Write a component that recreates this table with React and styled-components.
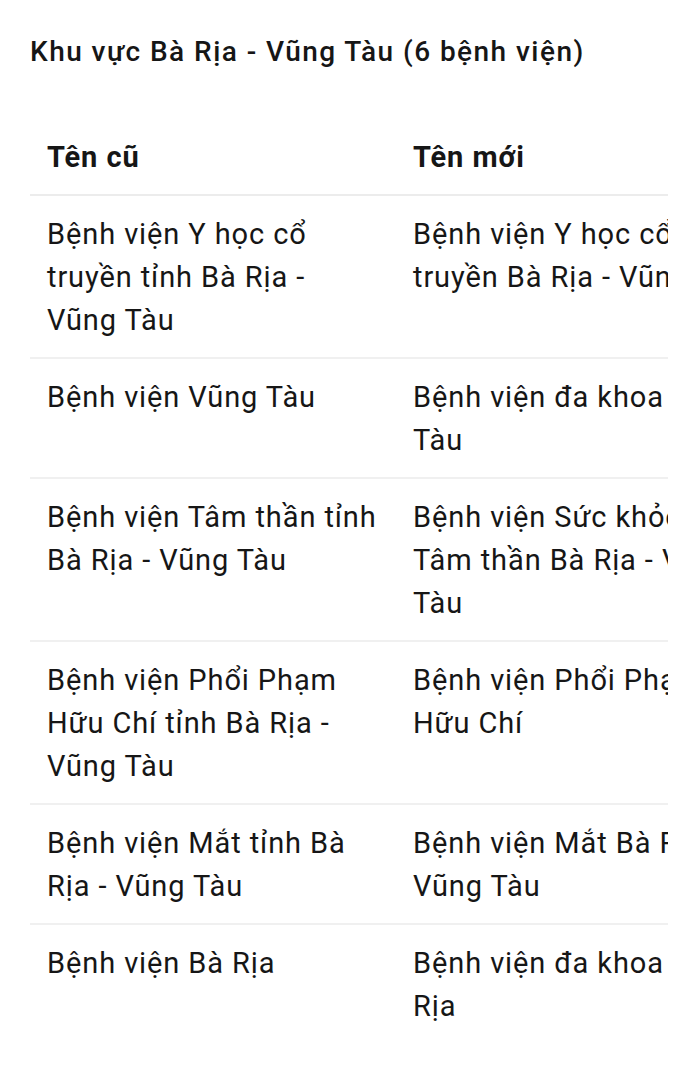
import styled, { createGlobalStyle } from 'styled-components';

const rows = [
    { old: "Bệnh viện Y học cổ truyền tỉnh Bà Rịa - Vũng Tàu", next: "Bệnh viện Y học cổ truyền Bà Rịa - Vũng Tàu" },
    { old: "Bệnh viện Vũng Tàu", next: "Bệnh viện đa khoa Vũng Tàu" },
    { old: "Bệnh viện Tâm thần tỉnh Bà Rịa - Vũng Tàu", next: "Bệnh viện Sức khỏe Tâm thần Bà Rịa - Vũng Tàu" },
    { old: "Bệnh viện Phổi Phạm Hữu Chí tỉnh Bà Rịa - Vũng Tàu", next: "Bệnh viện Phổi Phạm Hữu Chí" },
    { old: "Bệnh viện Mắt tỉnh Bà Rịa - Vũng Tàu", next: "Bệnh viện Mắt Bà Rịa - Vũng Tàu" },
    { old: "Bệnh viện Bà Rịa", next: "Bệnh viện đa khoa Bà Rịa" },
];

export default function App() {
    return (
        <>
            <GlobalStyle />
            <Page>
                <Title>Khu vực Bà Rịa - Vũng Tàu (6 bệnh viện)</Title>
                <TableWrap>
                    <Table>
                        <thead>
                            <tr>
                                <HeadCell>Tên cũ</HeadCell>
                                <HeadCell>Tên mới</HeadCell>
                            </tr>
                        </thead>
                        <tbody>
                            {rows.map((r, i) => (
                                <Row key={i} $last={i === rows.length - 1}>
                                    <Cell>{r.old}</Cell>
                                    <Cell>{r.next}</Cell>
                                </Row>
                            ))}
                        </tbody>
                    </Table>
                </TableWrap>
            </Page>
        </>
    )
}


// styled-components
const GlobalStyle = createGlobalStyle`
    body {
        margin: 0;
        background: #fff;
        font-family: Roboto, "Noto Sans", sans-serif;
        color: #161616;
    }
`

const Page = styled.div`
    padding: 32px 30px 0 30px;
`

const Title = styled.h2`
    margin: 0;
    font-size: 28px;
    font-weight: 500;
    line-height: 40px;
    letter-spacing: 1.45px;
`

const TableWrap = styled.div`
    margin-top: 46px;
    width: 638px;
    overflow: hidden;
`

const Table = styled.table`
    width: 732px;
    table-layout: fixed;
    border-collapse: collapse;
`

const HeadCell = styled.th`
    width: 50%;
    text-align: left;
    padding: 18px 15px 15px 17px;
    font-size: 29px;
    font-weight: 700;
    line-height: 43px;
    letter-spacing: 0.9px;
    border-bottom: 2px solid #ececec;
`

const Row = styled.tr`
    border-bottom: ${p => p.$last ? "none" : "2px solid #f0f0f0"};
`

const Cell = styled.td`
    vertical-align: top;
    padding: 17px 15px 15px 17px;
    font-size: 29px;
    line-height: 43px;
    font-weight: 400;
    letter-spacing: 0.9px;
`
